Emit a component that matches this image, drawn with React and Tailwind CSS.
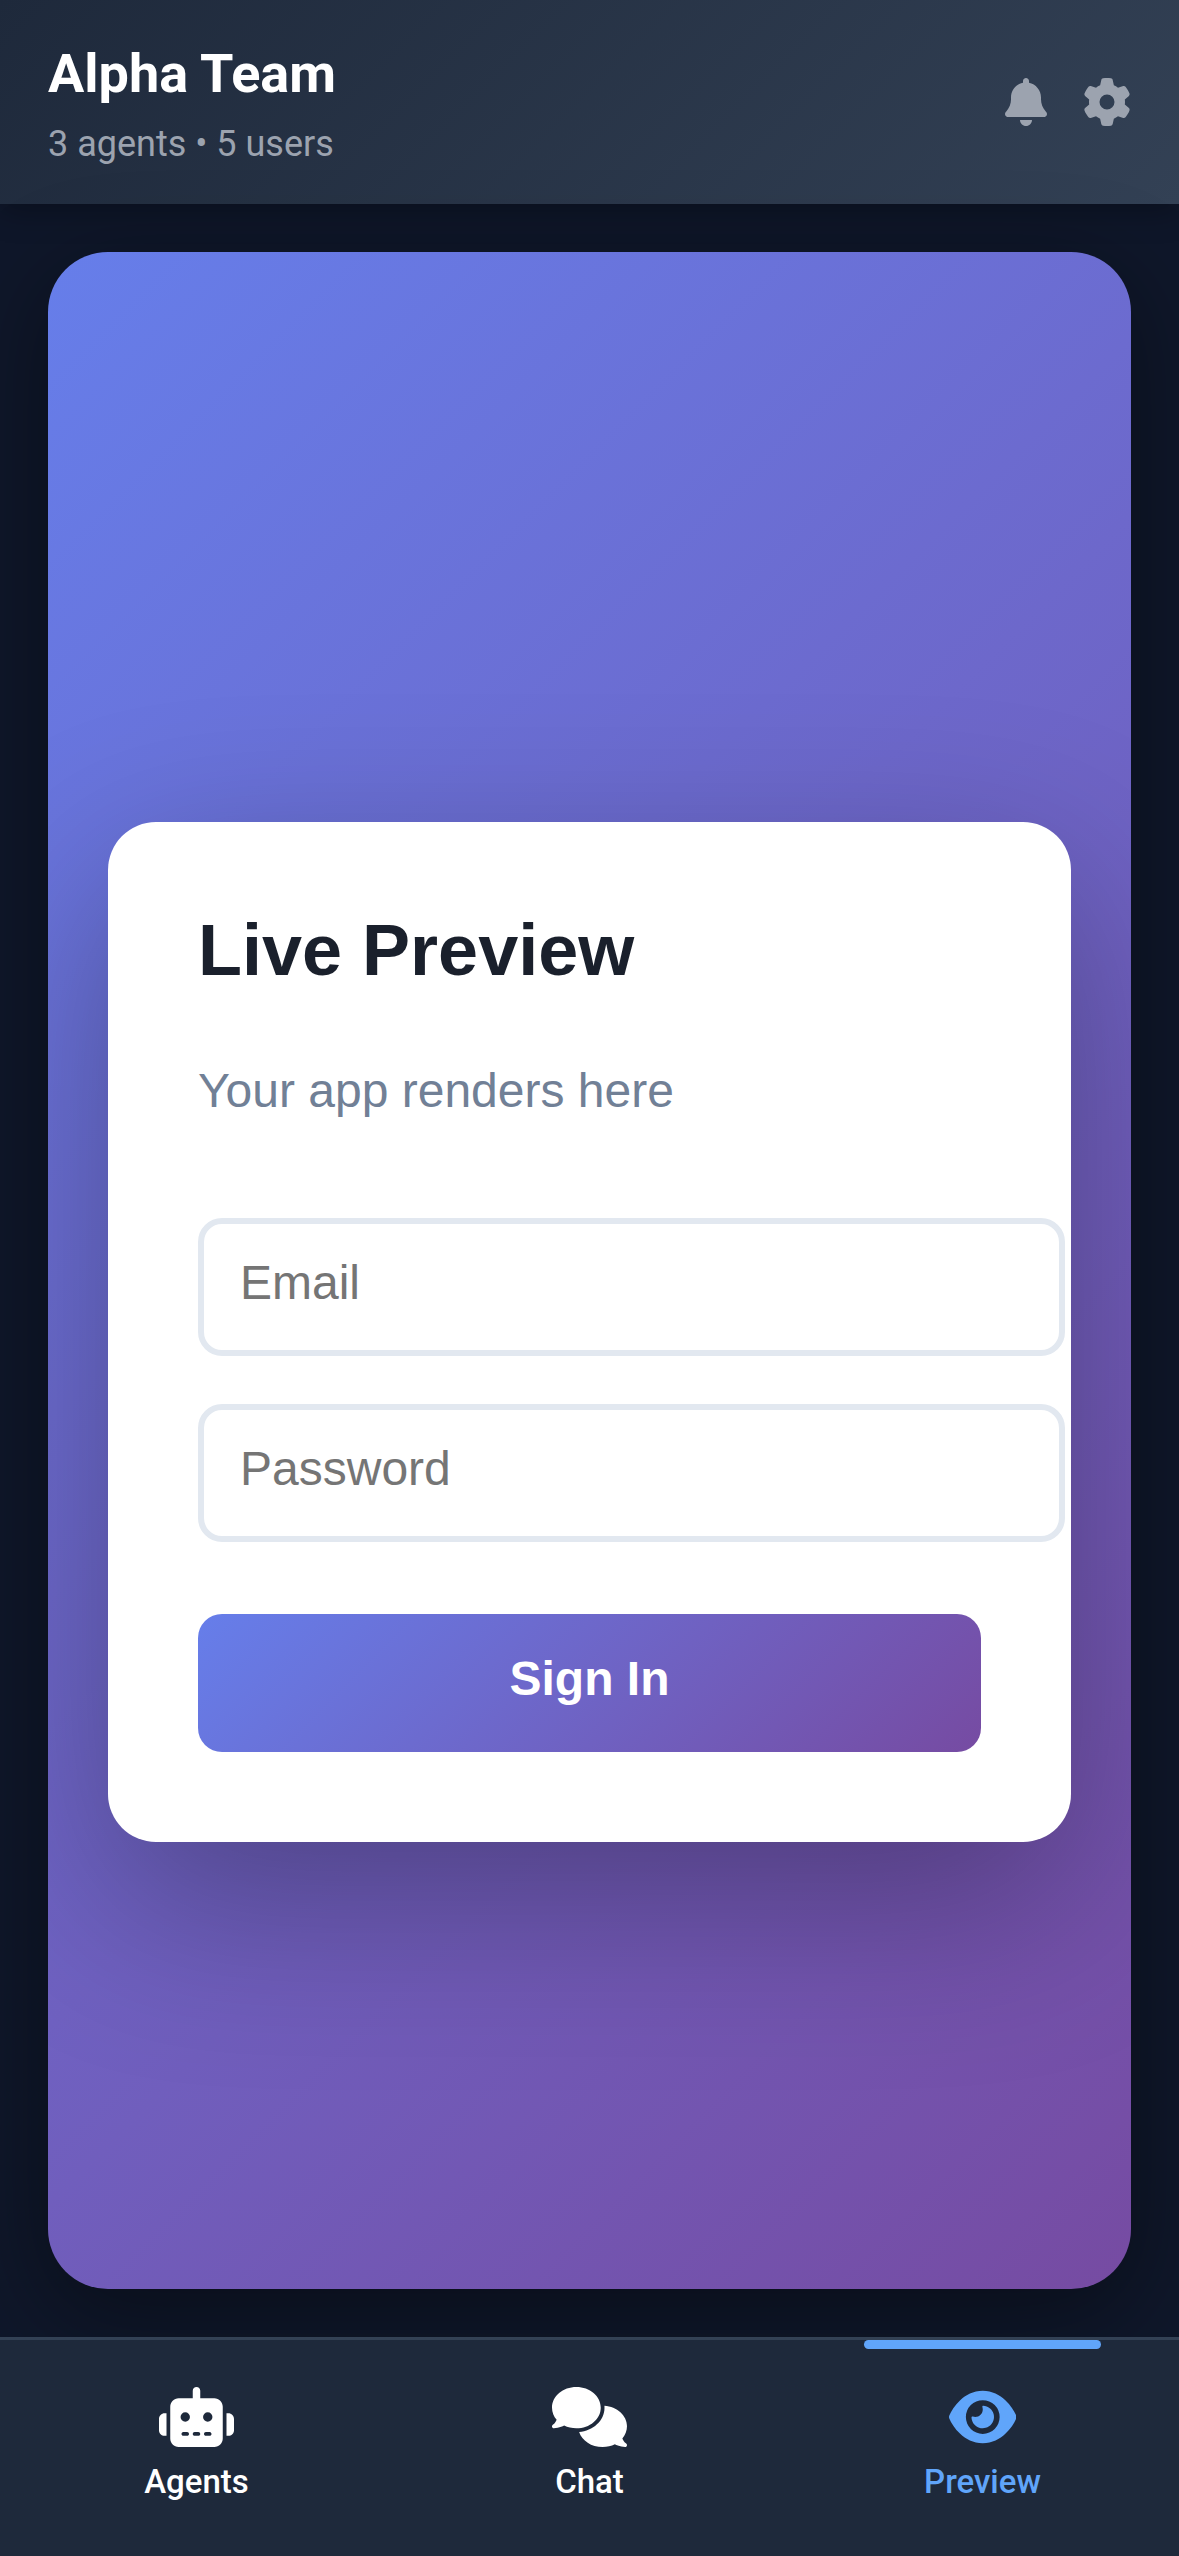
import { FaBell, FaGear, FaRobot, FaComments, FaEye } from "react-icons/fa6";

function Header() {
  return (
    <header className="relative flex h-[204px] shrink-0 items-center justify-between bg-[linear-gradient(135deg,#1e293b_0%,#334155_100%)] px-12 shadow-[0_6px_30px_rgba(0,0,0,0.3)]">
      <div>
        <h1 className="mb-[3px] text-[54px] leading-[81px] font-bold text-white">Alpha Team</h1>
        <p className="text-[36px] leading-[54px] text-[#9ca3af]">3 agents • 5 users</p>
      </div>
      <div className="flex items-center gap-9 text-[#9ca3af]">
        <FaBell className="h-12 w-[42px]" />
        <FaGear className="size-12" />
      </div>
    </header>
  );
}

function Field({ type, placeholder }) {
  return (
    <input
      type={type}
      placeholder={placeholder}
      className="block h-[138px] w-[867px] rounded-[24px] border-[6px] border-[#e2e8f0] bg-white px-9 pt-0 pb-[10px] text-[48px] placeholder:text-[#757575]"
    />
  );
}

function LoginCard() {
  return (
    <div className="h-[1020px] w-[963px] rounded-[48px] bg-white p-[90px] font-['Liberation_Sans',Arial,sans-serif] shadow-[0_60px_180px_rgba(0,0,0,0.3)]">
      <h2 className="mb-[75px] text-[72px] leading-[76px] font-bold text-[#1a202c]">Live Preview</h2>
      <p className="mb-[100px] text-[48px] leading-[55px] text-[#718096]">Your app renders here</p>
      <div className="flex flex-col gap-12">
        <Field type="email" placeholder="Email" />
        <Field type="password" placeholder="Password" />
      </div>
      <button className="mt-[72px] block h-[138px] w-full rounded-[24px] bg-[linear-gradient(135deg,#667eea_0%,#764ba2_100%)] pb-[8px] text-[48px] font-bold text-white">
        Sign In
      </button>
    </div>
  );
}

const tabs = [
  { label: "Agents", Icon: FaRobot, size: "w-[75px]" },
  { label: "Chat", Icon: FaComments, size: "w-[75px]" },
  { label: "Preview", Icon: FaEye, size: "w-[67.5px]", active: true },
];

function TabBar() {
  return (
    <nav className="relative grid h-[219px] shrink-0 grid-cols-3 border-t-[3px] border-[#334155] bg-[#1e293b]">
      {tabs.map(({ label, Icon, size, active }) => (
        <a
          key={label}
          className={`relative flex flex-col items-center pt-[46.5px] ${active ? "text-[#60a5fa]" : "text-white"}`}
        >
          {active && <span className="absolute top-0 left-[78px] h-[9px] w-[237px] rounded-[6px] bg-[#60a5fa]" />}
          <Icon className={`h-[60px] ${size}`} />
          <span className="mt-[10px] text-[33px] leading-[50px] font-medium">{label}</span>
        </a>
      ))}
    </nav>
  );
}

export default function App() {
  return (
    <div className="flex h-[2556px] w-[1179px] flex-col overflow-hidden bg-[#0f172a] font-[Roboto,sans-serif]">
      <Header />
      <main className="relative flex flex-1 p-12">
        <div className="flex-1 rounded-[60px] shadow-[0_24px_96px_rgba(0,0,0,0.4)]">
          <div className="flex h-full items-center justify-center overflow-hidden rounded-[60px] bg-[linear-gradient(135deg,#667eea_0%,#764ba2_100%)] pt-[123px]">
            <LoginCard />
          </div>
        </div>
      </main>
      <TabBar />
    </div>
  );
}
